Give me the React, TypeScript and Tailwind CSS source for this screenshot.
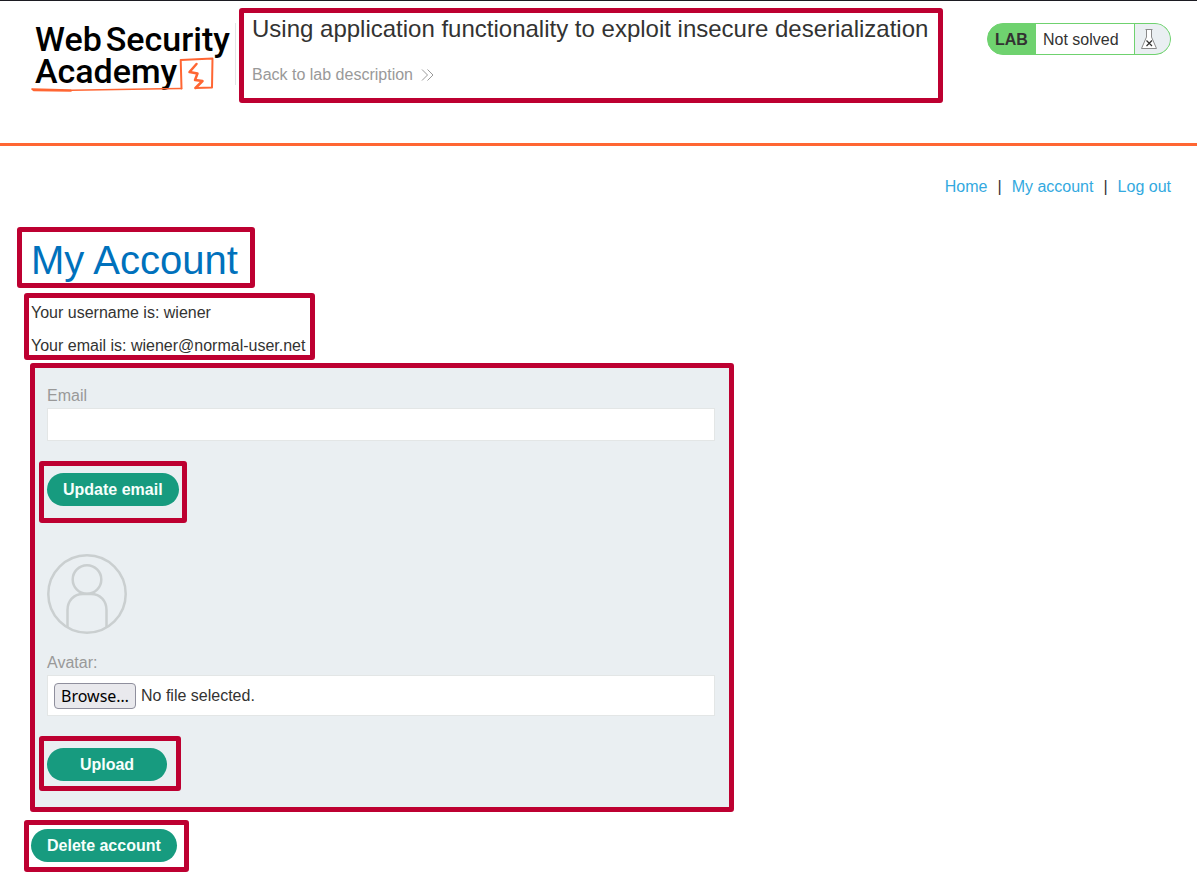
import { useRef, useState } from "react";
import type { ReactNode } from "react";

function Marker({ className }: { className: string }) {
  return (
    <span
      aria-hidden="true"
      className={`pointer-events-none absolute z-10 rounded-[3px] border-5 border-[#bd0031] ${className}`}
    />
  );
}

function PillButton({ children, className = "" }: { children: ReactNode; className?: string }) {
  return (
    <button
      type="button"
      className={`block h-[33px] cursor-pointer rounded-full bg-[#179b7f] px-4 text-base font-bold text-[#f7fffc] ${className}`}
    >
      {children}
    </button>
  );
}

function Logo() {
  return (
    <a
      href="#academy"
      className="relative block h-[72px] w-[200px] shrink-0 text-[34px] leading-8 font-medium text-black font-['Roboto',sans-serif]"
    >
      <span className="flex gap-1 pl-1">
        <span>Web</span>
        <span>Security</span>
      </span>
      <span className="block pl-1">Academy</span>
      <svg
        viewBox="0 0 200 72"
        className="absolute inset-0 h-[72px] w-[200px]"
        fill="none"
        stroke="#ff6633"
        strokeLinejoin="round"
        strokeLinecap="round"
        aria-hidden="true"
      >
        <path d="M150.500 65.500L149.700 37L181.500 35.500L181 64.500L164.500 65" strokeWidth="2" />
        <path d="M165.500 41L158.500 49L166.500 50.500L164 57L171.500 58L164.500 65" strokeWidth="2.500" />
        <path d="M1 66L40 67L40 68L3 67.500ZM40 67.200C72 66.700 112 66 150.500 65.500" strokeWidth="1.600" />
      </svg>
    </a>
  );
}

function LabStatus() {
  return (
    <div className="flex h-8 shrink-0 overflow-hidden rounded-full border border-[#6fd26f] bg-[#6fd26f]">
      <span className="flex w-12 items-center pt-0.5 pl-[7px] font-bold">LAB</span>
      <span className="flex w-[98px] items-center bg-white pt-0.5 pl-[7px]">Not solved</span>
      <span className="flex w-9 items-center border-l border-[#6fd26f] bg-[#eaeff2] pl-1.5">
        <svg viewBox="0 0 16 20" className="h-5 w-4" fill="none" stroke="#8a8a8a" aria-hidden="true">
          <path d="M5.500 1V8L0.500 19.500H15.500L10.500 8V1" fill="#fff" />
          <path d="M4.500 0.500H11.500" />
          <path d="M5.500 11.500L11 17M11 11.500L5.500 17" stroke="#333332" strokeWidth="1.200" />
        </svg>
      </span>
    </div>
  );
}

function Avatar() {
  return (
    <svg viewBox="0 0 80 80" className="mt-12 h-20 w-20" fill="none" stroke="#cacfd0" strokeWidth="2.500" role="img" aria-label="Avatar">
      <circle cx="40" cy="40" r="38.700" />
      <circle cx="40" cy="25.500" r="14.300" />
      <path d="M20.500 73V56C20.500 47 26.500 40 36 40H44C53.500 40 59.500 47 59.500 56V73" />
    </svg>
  );
}

function FileField() {
  const picker = useRef<HTMLInputElement>(null);
  const [name, setName] = useState("No file selected.");
  return (
    <div className="flex h-[41px] items-center gap-[5px] border border-[#e3e6e6] bg-white px-1.5">
      <input
        ref={picker}
        id="avatar"
        type="file"
        className="hidden"
        onChange={(e) => setName(e.target.files?.[0]?.name ?? "No file selected.")}
      />
      <button
        type="button"
        onClick={() => picker.current?.click()}
        className="h-[26px] w-[82px] rounded-[4px] border border-[#8f8f9d] bg-[#e9e9ed] text-base leading-6 text-black font-['Noto_Sans',sans-serif]"
      >
        Browse…
      </button>
      <span>{name}</span>
    </div>
  );
}

export default function App() {
  return (
    <div className="min-h-screen border-t border-[#1c1b22] bg-white text-base leading-6 text-[#333332] font-['Liberation_Sans',Arial,sans-serif]">
      <header className="flex h-[145px] items-start border-b-3 border-[#ff6633] pt-[22px] pr-[26px] pl-[31px]">
        <Logo />
        <div className="ml-1 h-[62px] border-l border-[#e2e4e5]" />
        <div className="relative -mt-[10px] ml-4">
          <h2 className="text-2xl leading-8">Using application functionality to exploit insecure deserialization</h2>
          <a href="#lab" className="mt-[18px] flex items-center gap-2 text-[#999999]">
            Back to lab description
            <svg viewBox="0 0 13 12" className="h-3 w-[13px]" fill="none" stroke="#999999" aria-hidden="true">
              <path d="M1 0.500L6.500 6L1 11.500M6.500 0.500L12 6L6.500 11.500" />
            </svg>
          </a>
          <Marker className="-top-[5px] -right-[15px] -bottom-4 -left-[13px]" />
        </div>
        <div className="ml-auto">
          <LabStatus />
        </div>
      </header>

      <main className="pr-[26px] pb-[10px] pl-[31px]">
        <nav className="flex justify-end gap-2.5 pt-[29px]">
          <a href="#home" className="text-[#33a9e0]">Home</a>
          <span>|</span>
          <a href="#my-account" className="text-[#33a9e0]">My account</a>
          <span>|</span>
          <a href="#logout" className="text-[#33a9e0]">Log out</a>
        </nav>

        <div className="relative mt-[37px] w-fit">
          <h1 className="text-[40px] leading-[48px] text-[#0071bc]">My Account</h1>
          <Marker className="-top-[9px] -right-[17px] -bottom-1 -left-[14px]" />
        </div>

        <div className="relative mt-[17px] w-fit space-y-[9px]">
          <p>Your username is: wiener</p>
          <p>Your email is: wiener@normal-user.net</p>
          <Marker className="-top-2 -right-[10px] -bottom-[2px] -left-[7px]" />
        </div>

        <section className="relative mt-[9px] w-full max-w-[700px] bg-[#eaeff2] px-4 pt-[17px] pb-[29px]">
          <form onSubmit={(e) => e.preventDefault()}>
            <label htmlFor="email" className="block text-[#999999]">Email</label>
            <input id="email" type="email" className="block h-[33px] w-full border border-[#e3e6e6] bg-white px-2 outline-none" />
            <div className="relative mt-8 w-fit">
              <PillButton>Update email</PillButton>
              <Marker className="-top-3 -right-2 -bottom-[17px] -left-2" />
            </div>
          </form>
          <form onSubmit={(e) => e.preventDefault()}>
            <Avatar />
            <label htmlFor="avatar" className="mt-[17px] block text-[#999999]">Avatar:</label>
            <FileField />
            <div className="relative mt-8 w-fit">
              <PillButton className="w-[120px]">Upload</PillButton>
              <Marker className="-top-3 -right-[14px] -bottom-[10px] -left-2" />
            </div>
          </form>
          <Marker className="-top-1 -right-[3px] -bottom-[2px] -left-px" />
        </section>

        <div className="relative mt-[19px] w-fit">
          <PillButton>Delete account</PillButton>
          <Marker className="-top-[9px] -right-3 -bottom-[10px] -left-[7px]" />
        </div>
      </main>
    </div>
  );
}
